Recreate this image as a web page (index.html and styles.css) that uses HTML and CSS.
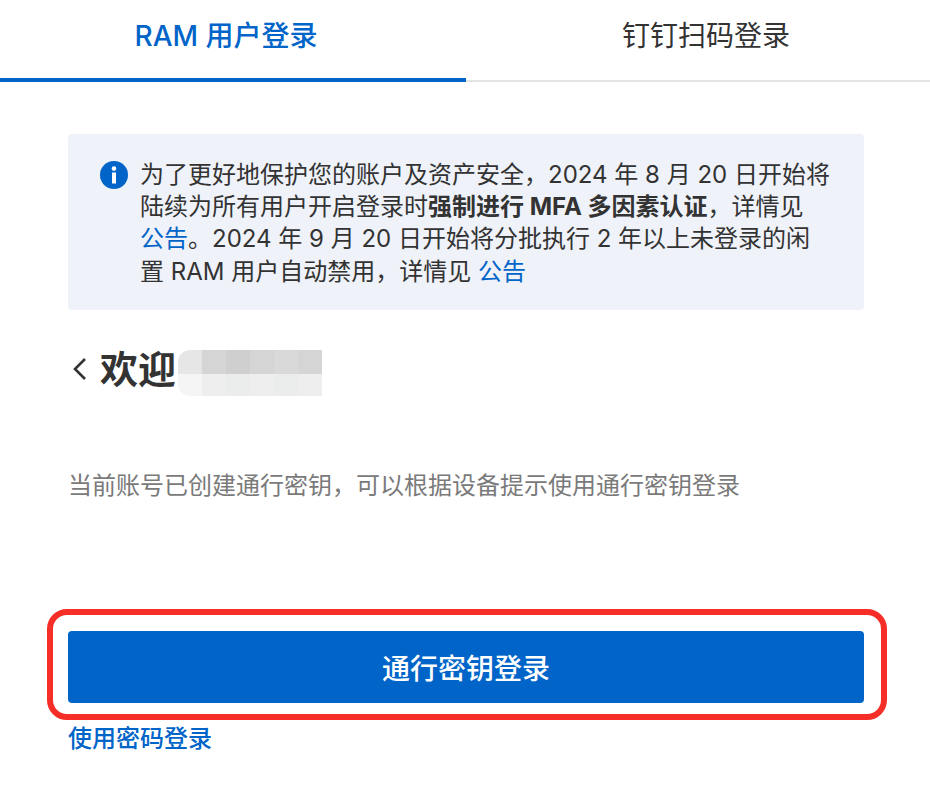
FILE: index.html
```html
<!DOCTYPE html>
<html lang="zh-CN">
  <head>
    <meta charset="UTF-8" />
    <meta name="viewport" content="width=device-width, initial-scale=1.0" />
    <title>RAM 用户登录</title>
    <link rel="stylesheet" href="styles.css">
  </head>
  <body>
    <div class="tabs">
      <a class="tab active">RAM 用户登录</a>
      <a class="tab">钉钉扫码登录</a>
    </div>

    <div class="content">
      <div class="notice">
        <svg class="notice-icon" viewBox="0 0 28 28" width="28" height="28">
          <circle cx="14" cy="14" r="14" fill="#0064c8" />
          <circle cx="14" cy="7.6" r="2.3" fill="#fff" />
          <rect x="12" y="11.5" width="4" height="11" fill="#fff" />
        </svg>
        <p class="notice-text">
          为了更好地保护您的账户及资产安全，2024 年 8 月 20 日开始将<br>
          陆续为所有用户开启登录时<b>强制进行 MFA 多因素认证</b>，详情见<br>
          <a>公告</a>。2024 年 9 月 20 日开始将分批执行 2 年以上未登录的闲<br>
          置 RAM 用户自动禁用，详情见 <a>公告</a>
        </p>
      </div>

      <div class="welcome">
        <svg class="back" viewBox="0 0 16 24" width="16" height="24">
          <path d="M15 2 L5 12 L15 22" fill="none" stroke="#333" stroke-width="2.6" />
        </svg>
        <h1>欢迎</h1>
        <!-- 打码的用户名 -->
        <div class="mosaic">
          <i class="s1"></i><i class="s3"></i><i class="s4"></i><i class="s3"></i><i class="s2"></i><i class="s3"></i>
          <i class="s5"></i><i class="s6"></i><i class="s7"></i><i class="s6"></i><i class="s7"></i><i class="s6"></i>
        </div>
      </div>

      <p class="hint">当前账号已创建通行密钥，可以根据设备提示使用通行密钥登录</p>

      <div class="actions">
        <button>通行密钥登录</button>
        <div class="highlight"></div>
      </div>
      <a class="alt-link">使用密码登录</a>
    </div>
  </body>
</html>
```

FILE: styles.css
```css
* {
  margin: 0;
  padding: 0;
  box-sizing: border-box;
}

body {
  background: #fff;
  color: #333;
  font-family: Inter, "Noto Sans CJK SC", sans-serif;
  overflow: hidden;
}

a {
  color: #0064c8;
}

/* 顶部标签 */
.tabs {
  display: flex;
  height: 82px;
  border-bottom: 2px solid #e3e3e3;
}

.tab {
  width: 464px;
  height: 82px;
  padding-top: 15px;
  padding-left: 16px;
  text-align: center;
  font-size: 28px;
  line-height: 42px;
  color: #333;
}

.tab.active {
  width: 466px;
  padding-left: 0;
  padding-right: 14px;
  color: #0064c8;
  font-weight: 500;
  border-bottom: 4px solid #0064c8;
}

.content {
  padding: 52px 66px 0 68px;
}

/* 提示框 */
.notice {
  display: flex;
  gap: 12px;
  height: 176px;
  padding: 24px 32px;
  background: #eff2f9;
  border-radius: 4px;
}

.notice-icon {
  flex-shrink: 0;
  margin-top: 3px;
}

.notice-text {
  margin-top: 1px;
  font-size: 24px;
  line-height: 32.2px;
  white-space: nowrap;
}

/* 欢迎 */
.welcome {
  display: flex;
  align-items: flex-start;
  height: 46px;
  margin-top: 40px;
}

.back {
  margin-top: 7px;
  margin-left: 2px;
  margin-right: 14px;
}

.welcome h1 {
  font-size: 38px;
  font-weight: 600;
  line-height: 38px;
}

.mosaic {
  display: grid;
  grid-template-columns: repeat(6, 24px);
  grid-template-rows: 24px 22px;
  margin-left: 2px;
  border-radius: 12px 0 0 12px;
  overflow: hidden;
}

.s1 { background: #e6e6e6; }
.s2 { background: #d9d9d9; }
.s3 { background: #d5d5d5; }
.s4 { background: #cfcfcf; }
.s5 { background: #f5f5f5; }
.s6 { background: #eeeeee; }
.s7 { background: #ebecec; }

.hint {
  margin-top: 72px;
  font-size: 24px;
  line-height: 36px;
  color: #7a7a7a;
}

/* 登录按钮 */
.actions {
  position: relative;
  margin-top: 127px;
}

.actions button {
  display: block;
  width: 100%;
  height: 72px;
  border: none;
  border-radius: 4px;
  background: #0064c8;
  color: #fff;
  font-family: inherit;
  font-size: 28px;
  font-weight: 500;
}

.highlight {
  position: absolute;
  top: -22px;
  left: -21px;
  right: -23px;
  bottom: -17px;
  border: 6px solid #f52f28;
  border-radius: 20px;
}

.alt-link {
  display: block;
  margin-top: 18px;
  font-size: 24px;
  font-weight: 500;
  line-height: 36px;
}
```
